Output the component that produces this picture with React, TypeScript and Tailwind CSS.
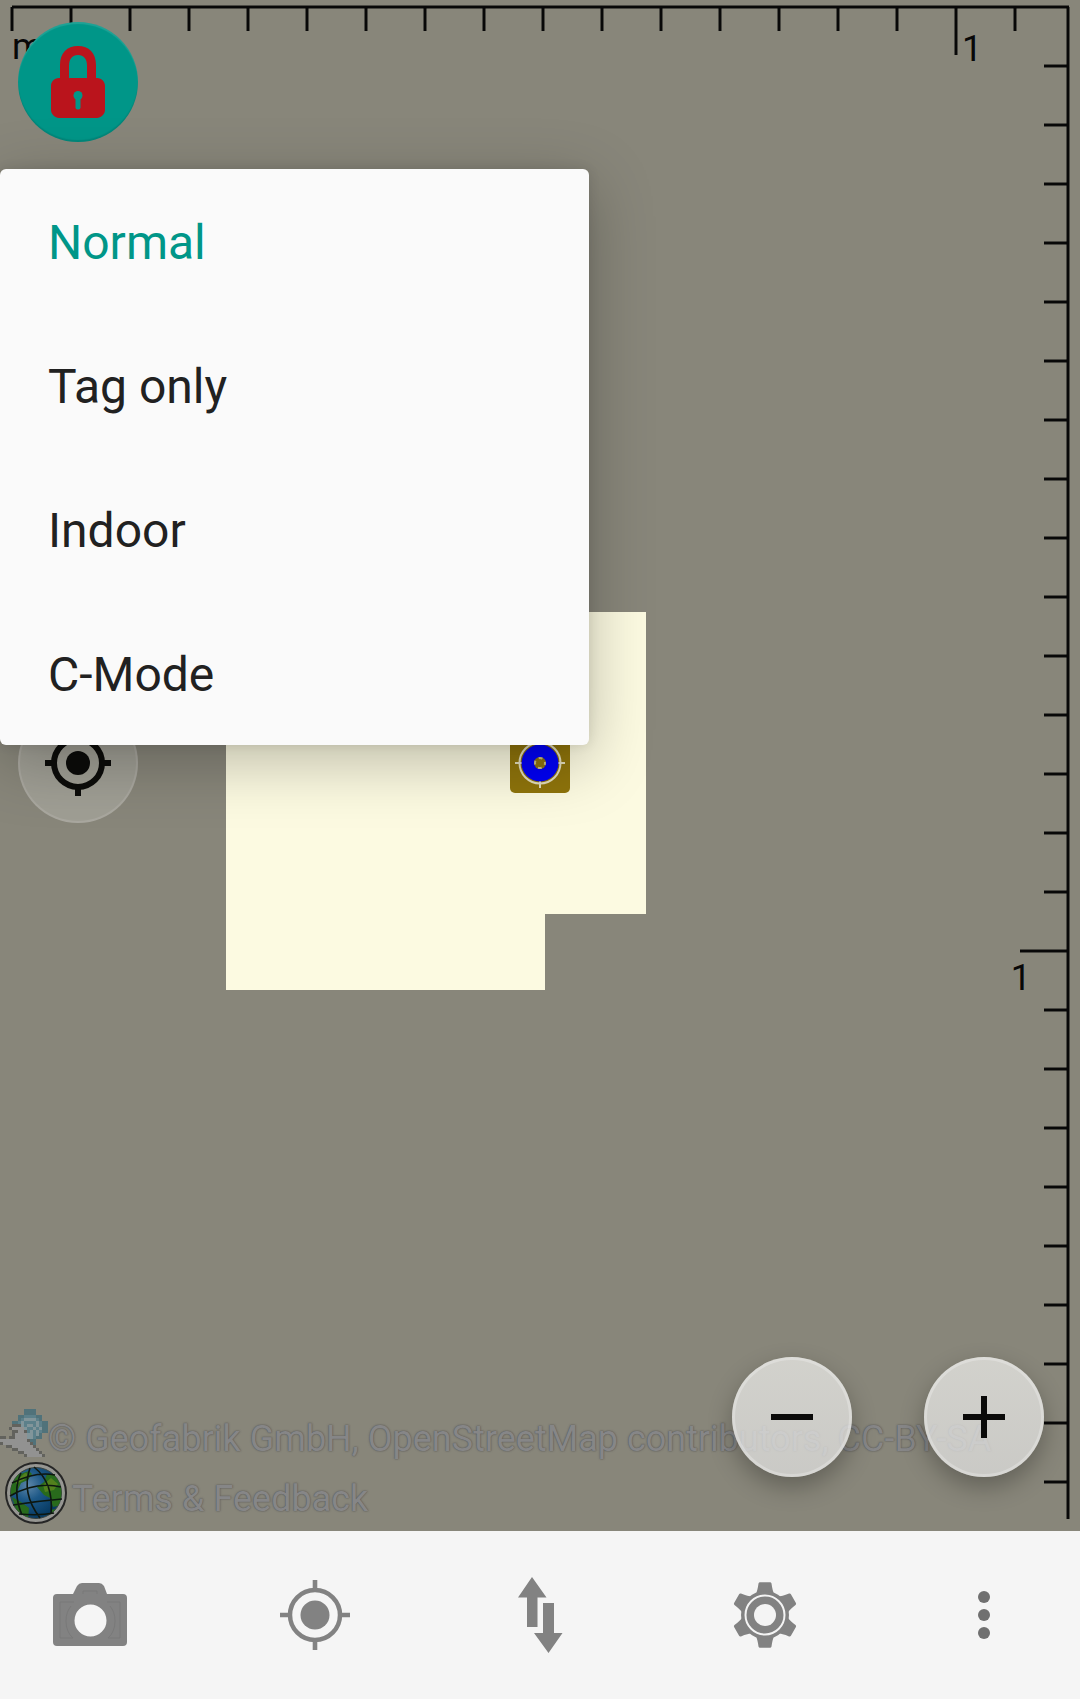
import React from "react";

const STEP = 59;
const steps = (n: number) => Array.from({ length: n }, (_, i) => i);

function TopRuler() {
  return (
    <svg className="absolute left-[10px] right-[11px] top-[5px] h-14 w-[calc(100%-21px)]" fill="none" aria-hidden="true">
      <g stroke="#000" strokeOpacity="0.45" strokeWidth="4">
        <line x1="2" y1="2" x2="100%" y2="2" />
        {steps(60).map((i) => (
          <line key={i} x1={2 + i * STEP} x2={2 + i * STEP} y1="2" y2={i > 0 && i % 16 === 0 ? 50 : 26} />
        ))}
      </g>
      <g stroke="#080808" strokeWidth="2">
        <line x1="2" y1="2" x2="100%" y2="2" />
        {steps(60).map((i) => (
          <line key={i} x1={2 + i * STEP} x2={2 + i * STEP} y1="2" y2={i > 0 && i % 16 === 0 ? 50 : 26} />
        ))}
      </g>
    </svg>
  );
}

function SideRuler() {
  return (
    <svg className="absolute bottom-3 right-[10px] top-[5px] h-[calc(100%-17px)] w-[50px]" fill="none" aria-hidden="true">
      <g stroke="#000" strokeOpacity="0.45" strokeWidth="4">
        <line x1="48" y1="2" x2="48" y2="100%" />
        {steps(60).slice(1).map((i) => (
          <line key={i} x1={i % 16 === 0 ? 0 : 24} x2="48" y1={2 + i * STEP} y2={2 + i * STEP} />
        ))}
      </g>
      <g stroke="#080808" strokeWidth="2">
        <line x1="48" y1="2" x2="48" y2="100%" />
        {steps(60).slice(1).map((i) => (
          <line key={i} x1={i % 16 === 0 ? 0 : 24} x2="48" y1={2 + i * STEP} y2={2 + i * STEP} />
        ))}
      </g>
    </svg>
  );
}

function Marker() {
  return (
    <svg viewBox="0 0 60 60" className="h-[60px] w-[60px]" aria-hidden="true">
      <rect width="60" height="60" rx="5" fill="#8f740b" />
      <circle cx="30" cy="30" r="20.500" fill="none" stroke="#e2dcbc" strokeWidth="2" />
      <path d="M30 5v7M30 48v7M5 30h7M48 30h7" stroke="#e2dcbc" strokeWidth="2" />
      <circle cx="30" cy="30" r="18.500" fill="#0000f6" />
      <circle cx="30" cy="30" r="6" fill="#8f740b" />
      <circle cx="30" cy="30" r="5" fill="none" stroke="#c9bd86" strokeWidth="2" strokeDasharray="3.9 3.95" strokeDashoffset="1.95" />
    </svg>
  );
}

function LockIcon() {
  return (
    <svg viewBox="0 0 56 74" className="h-[74px] w-14" aria-hidden="true">
      <path
        fill="#ba141c"
        fillRule="evenodd"
        d="M9 33h1V20C10 8 17 1 28 1s18 7 18 19v13h1c5 0 8 4 8 8v24c0 4-4 8-8 8H9c-4 0-8-4-8-8V41c0-4 3-8 8-8ZM19 33h18V21c0-7-3-11-9-11s-9 4-9 11Z"
      />
      <circle cx="28" cy="50.500" r="4.500" fill="#009688" />
      <rect x="25.500" y="52" width="5" height="12.500" rx="2" fill="#009688" />
    </svg>
  );
}

function LocateIcon() {
  return (
    <svg viewBox="0 0 66 66" className="h-[66px] w-[66px]" aria-hidden="true">
      <circle cx="33" cy="33" r="24" fill="none" stroke="#0c0c0a" strokeWidth="6" />
      <circle cx="33" cy="33" r="12" fill="#0c0c0a" />
      <path d="M33 0v8M33 58v8M0 33h8M58 33h8" stroke="#0c0c0a" strokeWidth="6" />
    </svg>
  );
}

const wrenchRows = [
  "........bbbb....",
  "........bbbb....",
  "......bbttttbb..",
  "......btggggtb..",
  "....bbtgttttgtbb",
  "....dddgtggtgtbb",
  "...dwwwwgttgtgbb",
  "....ddwwdtgtgtbb",
  "....dwwwwggtgb..",
  "dd.ddwwwwggtbb..",
  "wwwwwwwwwdbb....",
  "dwwwwwwwwwdb....",
  "..ddwwwwwwwd....",
  "....ddwwwwwwd...",
  "......ddwwwwwd..",
  "........dwwwwwd.",
];
const wrenchColors: Record<string, string> = {
  b: "#50727a",
  t: "#5c808a",
  g: "#81959a",
  w: "#929291",
  d: "#62625d",
};

function WrenchIcon() {
  return (
    <svg viewBox="0 0 16 16" className="h-12 w-12 shrink-0" shapeRendering="crispEdges" aria-hidden="true">
      {wrenchRows.flatMap((row, y) =>
        row.split("").map((c, x) =>
          c === "." ? null : <rect key={`${x}-${y}`} x={x} y={y} width="1" height="1" fill={wrenchColors[c]} />,
        ),
      )}
    </svg>
  );
}

function GlobeIcon() {
  return (
    <svg viewBox="0 0 64 64" className="-mt-2 h-16 w-16 shrink-0" aria-hidden="true">
      <defs>
        <radialGradient id="sea" cx="35%" cy="35%" r="65%">
          <stop offset="0" stopColor="#5d86a8" />
          <stop offset="0.45" stopColor="#1d5887" />
          <stop offset="1" stopColor="#073a62" />
        </radialGradient>
        <clipPath id="disc"><circle cx="32" cy="32" r="25.500" /></clipPath>
      </defs>
      <circle cx="32" cy="32" r="30" fill="#969692" stroke="#262626" strokeWidth="2" />
      <circle cx="32" cy="32" r="25.500" fill="url(#sea)" stroke="#3a4340" strokeWidth="1" />
      <g clipPath="url(#disc)">
        <path fill="#286a1c" d="M6 26 13 14l12-4 3 3-4 6-7 3-4 9-6 4ZM33 26l7-5 3-8 8 1 9 14-2 16-9 2-3-9-6-3ZM8 36l9 5 8 6-1 12-10-4ZM47 49l9-2-7 10Z" />
        <path fill="#52801d" d="m12 20 9-8 4 1-5 6-8 4ZM39 24l8-7 7 6-4 6-9 2Z" />
      </g>
      <path fill="none" stroke="#0d1710" strokeWidth="1.600" d="M8 22q24-12 43-8M6 35q26-15 51-9M9 44q25-4 49-6M15 53q20 2 35-1M17 12q-9 18 1 42M26 7q-9 25 10 50M30 6q20 16 17 47" />
    </svg>
  );
}

function CameraIcon() {
  return (
    <svg viewBox="0 1 76 64" className="h-16 w-[76px]" aria-hidden="true">
      <path
        fill="#828282"
        fillRule="evenodd"
        d="M5 12h16l4-8q2-3 5-3h17q3 0 5 3l3 8h16q4 0 4 4v44q0 4-4 4H5q-4 0-4-4V16q0-4 4-4ZM38.500 22.500a16 16 0 1 0 0 32 16 16 0 1 0 0-32Z"
      />
      <path fill="none" stroke="#797979" strokeWidth="1" d="M22 20H8v36h13q-7-6-7-17 0-9 5-15M55 20h13v36H56q7-6 7-17 0-9-5-15M31 12V9h14v3" />
    </svg>
  );
}

function CrosshairIcon() {
  return (
    <svg viewBox="0 0 72 72" className="h-[72px] w-[72px]" aria-hidden="true">
      <circle cx="36" cy="36" r="25" fill="none" stroke="#828282" strokeWidth="4.500" />
      <circle cx="36" cy="36" r="14.500" fill="#828282" />
      <path d="M36 1v10M36 61v10M1 36h10M61 36h10" stroke="#828282" strokeWidth="4.600" />
    </svg>
  );
}

function TransferIcon() {
  return (
    <svg viewBox="0 0 46 76" className="h-[76px] w-[46px]" fill="#828282" aria-hidden="true">
      <path d="M15 0 29.500 20.500H20.500V50H10V20.500H1Z" />
      <path d="M31.500 76 17 56h9V26h11v30h8.500Z" />
    </svg>
  );
}

function GearIcon() {
  const tooth = "M-9.500-20Q-7.500-24-6.500-31.500-6.200-32.800-5-32.800H5Q6.200-32.800 6.500-31.500 7.500-24 9.500-20Z";
  return (
    <svg viewBox="-33 -33 66 66" className="h-[66px] w-[66px]" aria-hidden="true">
      <g fill="#828282">
        {[0, 60, 120, 180, 240, 300].map((a) => (
          <path key={a} d={tooth} transform={`rotate(${a})`} />
        ))}
        <circle r="24" />
      </g>
      <circle r="19.500" fill="none" stroke="#f4f4f4" strokeWidth="2" />
      <circle r="11" fill="#f4f4f4" />
    </svg>
  );
}

const modes = ["Normal", "Tag only", "Indoor", "C-Mode"];

const fab =
  "flex h-[120px] w-[120px] items-center justify-center rounded-full bg-linear-to-b from-[#ebebe8]/75 to-[#e0e0df]/75 shadow-[0_10px_24px_rgba(0,0,0,0.28),inset_0_0_0_3px_rgba(255,255,255,0.25)]";
const credit =
  "whitespace-nowrap text-4xl leading-[60px] text-[#868687] [text-shadow:0_0_2px_#555,0_0_1px_#666]";
const tool = "flex h-full w-[180px] items-center justify-center";
const rulerLabel = "absolute text-4xl leading-[42px] text-[#080808]";

export default function App() {
  return (
    <div className="flex min-h-screen flex-col overflow-hidden bg-[#88867a] font-[Roboto,sans-serif]">
      <main className="relative flex-1 overflow-hidden">
        <svg className="absolute left-1/2 top-[612px] ml-[-314px] h-[378px] w-[420px]" viewBox="0 0 420 378" aria-hidden="true">
          <path fill="#fcfae1" d="M0 0h420v302H319v76H0Z" />
        </svg>
        <div className="absolute left-1/2 top-[733px] -translate-x-1/2">
          <Marker />
        </div>

        <TopRuler />
        <SideRuler />
        <span className={`${rulerLabel} left-3 top-[26px]`}>m</span>
        <span className={`${rulerLabel} left-[962px] top-7`}>1</span>
        <span className={`${rulerLabel} right-[49px] top-[957px]`}>1</span>

        <footer className="absolute bottom-0.5 left-0">
          <div className="flex h-[60px] items-start">
            <WrenchIcon />
            <p className={credit}>© Geofabrik GmbH, OpenStreetMap contributors, CC-BY-SA</p>
          </div>
          <div className="flex h-[60px] items-start gap-1 pl-1">
            <GlobeIcon />
            <a href="#terms" className={credit}>Terms &amp; Feedback</a>
          </div>
        </footer>

        <div className="absolute bottom-[54px] right-9 flex gap-[72px]">
          <button type="button" aria-label="Zoom out" className={fab}>
            <svg viewBox="0 0 42 42" className="h-[42px] w-[42px]" aria-hidden="true">
              <path d="M0 21h42" stroke="#0a0a09" strokeWidth="6" />
            </svg>
          </button>
          <button type="button" aria-label="Zoom in" className={fab}>
            <svg viewBox="0 0 42 42" className="h-[42px] w-[42px]" aria-hidden="true">
              <path d="M0 21h42M21 0v42" stroke="#0a0a09" strokeWidth="6" />
            </svg>
          </button>
        </div>

        <button
          type="button"
          aria-label="Editing mode"
          className="absolute left-[18px] top-[22px] flex h-[120px] w-[120px] items-center justify-center rounded-full bg-[#009688] shadow-[inset_0_2px_1px_rgba(255,255,255,0.12),inset_0_-2px_1px_rgba(0,0,0,0.1)]"
        >
          <LockIcon />
        </button>
        <button
          type="button"
          aria-label="Follow position"
          className="absolute left-[18px] top-[703px] flex h-[120px] w-[120px] items-center justify-center rounded-full border-2 border-white/10 bg-white/20"
        >
          <LocateIcon />
        </button>

        <div
          role="menu"
          className="absolute left-0 top-[169px] flex w-[589px] flex-col overflow-hidden rounded-md bg-[#fafafa] shadow-[0_16px_64px_rgba(0,0,0,0.26),0_0_12px_rgba(0,0,0,0.1)]"
        >
          {modes.map((mode, i) => (
            <button
              key={mode}
              type="button"
              role="menuitem"
              className={
                i === 0
                  ? "h-36 px-12 pt-1 text-left text-5xl text-[#009688]"
                  : "h-36 px-12 pt-1 text-left text-5xl text-[#212121]"
              }
            >
              {mode}
            </button>
          ))}
        </div>
      </main>

      <nav className="flex h-[168px] items-center bg-[#f5f5f5] pr-9">
        <div className="flex h-full flex-1 justify-between">
          <button type="button" aria-label="Camera" className={tool}><CameraIcon /></button>
          <button type="button" aria-label="Position" className={tool}><CrosshairIcon /></button>
          <button type="button" aria-label="Transfer" className={tool}><TransferIcon /></button>
          <button type="button" aria-label="Preferences" className={tool}><GearIcon /></button>
        </div>
        <button type="button" aria-label="More options" className="ml-[69px] flex h-full w-[120px] flex-col items-center justify-center gap-1.5">
          <i className="h-3 w-3 rounded-full bg-[#707070]" />
          <i className="h-3 w-3 rounded-full bg-[#707070]" />
          <i className="h-3 w-3 rounded-full bg-[#707070]" />
        </button>
      </nav>
    </div>
  );
}
